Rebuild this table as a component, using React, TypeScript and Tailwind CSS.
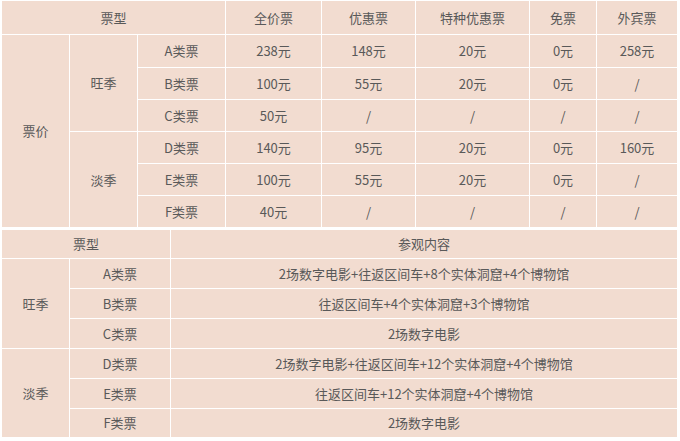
import { Fragment } from 'react';

const cell = 'bg-[#f2dcd0] flex items-center justify-center';

const priceRows = [
  ['A类票', '238元', '148元', '20元', '0元', '258元'],
  ['B类票', '100元', '55元', '20元', '0元', '/'],
  ['C类票', '50元', '/', '/', '/', '/'],
  ['D类票', '140元', '95元', '20元', '0元', '160元'],
  ['E类票', '100元', '55元', '20元', '0元', '/'],
  ['F类票', '40元', '/', '/', '/', '/'],
];

const visitRows = [
  ['A类票', '2场数字电影+往返区间车+8个实体洞窟+4个博物馆'],
  ['B类票', '往返区间车+4个实体洞窟+3个博物馆'],
  ['C类票', '2场数字电影'],
  ['D类票', '2场数字电影+往返区间车+12个实体洞窟+4个博物馆'],
  ['E类票', '往返区间车+12个实体洞窟+4个博物馆'],
  ['F类票', '2场数字电影'],
];

function PriceTable() {
  return (
    <div className="ml-px grid w-[677px] grid-cols-[67px_67px_87px_95px_93px_113px_66px_80px] grid-rows-[33px_32px_31px_31px_31px_31px_31px] gap-px bg-white p-px">
      <div className={`${cell} col-span-3`}>票型</div>
      <div className={cell}>全价票</div>
      <div className={cell}>优惠票</div>
      <div className={cell}>特种优惠票</div>
      <div className={cell}>免票</div>
      <div className={cell}>外宾票</div>

      <div className={`${cell} row-span-6`}>票价</div>
      <div className={`${cell} row-span-3`}>旺季</div>
      {priceRows.slice(0, 3).map((r) =>
        r.map((v, i) => (
          <div key={r[0] + i} className={cell}>
            {v}
          </div>
        ))
      )}
      <div className={`${cell} row-span-3`}>淡季</div>
      {priceRows.slice(3).map((r) =>
        r.map((v, i) => (
          <div key={r[0] + i} className={cell}>
            {v}
          </div>
        ))
      )}
    </div>
  );
}

function VisitTable() {
  return (
    <div className="ml-px mt-px grid w-[677px] grid-cols-[67px_100px_506px] grid-rows-[28px_29px_29px_29px_29px_29px_28px] gap-px bg-white p-px">
      <div className={`${cell} col-span-2`}>票型</div>
      <div className={cell}>参观内容</div>

      <div className={`${cell} row-span-3`}>旺季</div>
      {visitRows.slice(0, 3).map((r) => (
        <Fragment key={r[0]}>
          <div className={cell}>{r[0]}</div>
          <div className={cell}>{r[1]}</div>
        </Fragment>
      ))}
      <div className={`${cell} row-span-3`}>淡季</div>
      {visitRows.slice(3).map((r) => (
        <Fragment key={r[0]}>
          <div className={cell}>{r[0]}</div>
          <div className={cell}>{r[1]}</div>
        </Fragment>
      ))}
    </div>
  );
}

export default function App() {
  return (
    <div className="h-[441px] w-[680px] overflow-hidden bg-white font-['Noto_Sans_CJK_SC',sans-serif] text-[13px] text-[#595959]">
      <PriceTable />
      <VisitTable />
    </div>
  );
}
